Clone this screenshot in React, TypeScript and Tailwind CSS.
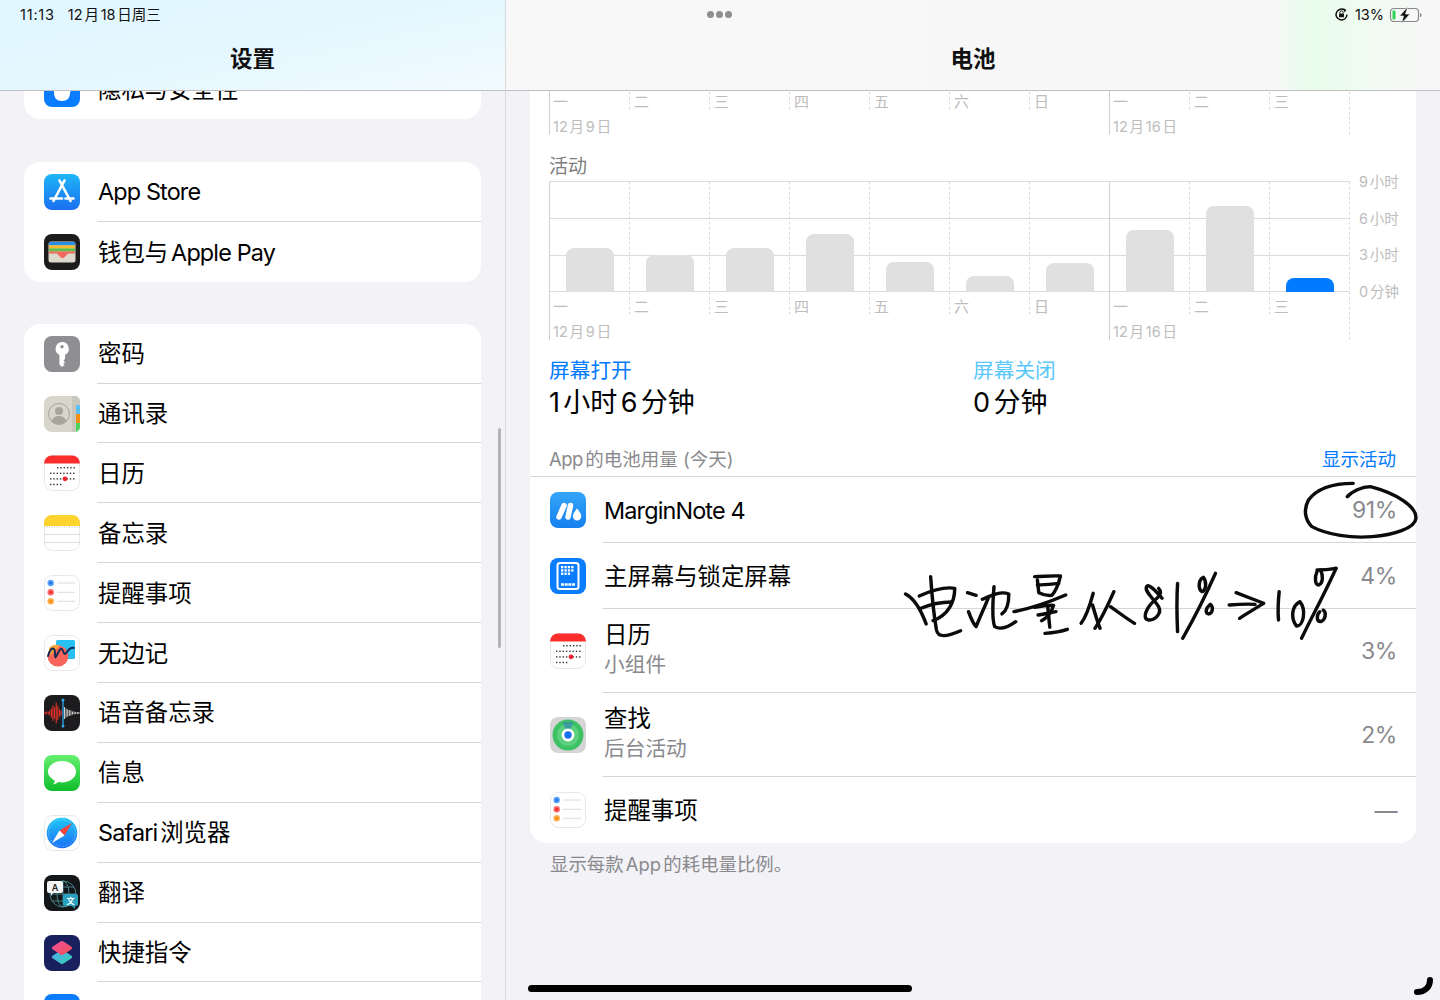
import React from "react";

const L = ({ children }: { children: React.ReactNode }) => <span className="tracking-[-0.85px]">{children}</span>;

const Cal = () => (
  <svg viewBox="0 0 36 36" className="w-9 h-9">
    <rect x="0.5" y="0.5" width="35" height="35" rx="8" fill="#fff" stroke="#e8e8e8" />
    <path d="M0 8.5a8 8 0 0 1 8-8h20a8 8 0 0 1 8 8H0z" fill="#fb2d2d" />
    {[[13,12,6],[6,17.6,8],[6,23.2,8],[6,28.8,4]].map((r,i)=>(
      <g key={i}>{Array.from({length:r[2]}).map((_,j)=>(
        <rect key={j} x={r[0]+j*3.3} y={r[1]} width="1.4" height="1.4" fill="#333" />
      ))}</g>
    ))}
    <circle cx="21" cy="23.8" r="2.4" fill="#f5222d" />
  </svg>
);
const Rem = () => (
  <svg viewBox="0 0 36 36" className="w-9 h-9">
    <rect x="0.5" y="0.5" width="35" height="35" rx="8" fill="#fff" stroke="#e8e8e8" />
    <circle cx="6.7" cy="8" r="3.2" fill="#5aa2f8" /><circle cx="6.7" cy="17.3" r="3.2" fill="#fa6868" /><circle cx="6.7" cy="26.3" r="3.2" fill="#fdb04e" />
    <circle cx="6.7" cy="8" r="1.5" fill="#1f6fe6" /><circle cx="6.7" cy="17.3" r="1.5" fill="#ee2b2b" /><circle cx="6.7" cy="26.3" r="1.5" fill="#f28c10" />
    <path d="M13 8h18M13 17.3h18M13 26.3h18" stroke="#dcdcdc" strokeWidth="1" />
  </svg>
);
const Privacy = () => (
  <svg viewBox="0 0 36 36" className="w-9 h-9">
    <rect width="36" height="36" rx="8" fill="#0a7cff" />
    <path d="M10 10v12c0 5 3 8 8 8s8-3 8-8c1-3 2-8 2-10l-3 2-2 6V6H12z" fill="#fff" />
  </svg>
);
const AppStore = () => (
  <svg viewBox="0 0 36 36" className="w-9 h-9">
    <defs><linearGradient id="as" x1="0" y1="0" x2="0" y2="1"><stop offset="0" stopColor="#1fb6f7" /><stop offset="1" stopColor="#1a6ff0" /></linearGradient></defs>
    <rect width="36" height="36" rx="8" fill="url(#as)" />
    <path d="M15.5 6.500L26.500 27M20.500 6.500L9.500 27M6.500 24.500H18M21.500 24.500H29.500" stroke="#fff" strokeWidth="2.600" strokeLinecap="round" fill="none" />
  </svg>
);
const Wallet = () => (
  <svg viewBox="0 0 36 36" className="w-9 h-9">
    <rect width="36" height="36" rx="8" fill="#1c1c1e" />
    <rect x="4.5" y="7.5" width="27" height="21" rx="2.5" fill="#ddd9cc" />
    <rect x="5" y="8" width="26" height="3.4" fill="#2a8de8" />
    <rect x="5" y="11.4" width="26" height="3" fill="#f9b928" />
    <rect x="5" y="14.4" width="26" height="3" fill="#5fbe4a" />
    <path d="M5 17.4h26v2H24l-3 3.4a3 3 0 0 1-5 0l-3-3.4H5z" fill="#f2695c" />
  </svg>
);
const Key = () => (
  <svg viewBox="0 0 36 36" className="w-9 h-9">
    <rect width="36" height="36" rx="8" fill="#8e8e93" />
    <path fillRule="evenodd" d="M18 6a6.8 6.8 0 0 1 3 12.9v4.1l-1.6 1.6 1.6 1.6-1.6 1.6 1.2 1.2L18 31l-2.6-2.6v-9.5A6.8 6.8 0 0 1 18 6zm0 3a1.7 1.7 0 1 0 0 3.4A1.7 1.7 0 0 0 18 9z" fill="#fff" />
  </svg>
);
const Contacts = () => (
  <svg viewBox="0 0 36 36" className="w-9 h-9">
    <rect width="36" height="36" rx="8" fill="#d8d5cb" />
    <path d="M31 0h-3v36h3a5 5 0 0 0 5-5V5a5 5 0 0 0-5-5z" fill="#c9c6bc" />
    <rect x="32" y="9" width="4" height="9" fill="#5ac1fb" /><rect x="32" y="18" width="4" height="9" fill="#f98e14" /><path d="M32 27h4v3a6 6 0 0 1-4 6z" fill="#4fd35f" />
    <circle cx="15" cy="18" r="10.5" fill="none" stroke="#a7a49b" strokeWidth="1" />
    <circle cx="15" cy="15" r="4" fill="#a7a49b" />
    <path d="M7.5 25c1.5-3.5 4-5 7.5-5s6 1.500 7.500 5a10.500 10.500 0 0 1-15 0z" fill="#a7a49b" />
  </svg>
);
const Notes = () => (
  <svg viewBox="0 0 36 36" className="w-9 h-9">
    <rect x="0.5" y="0.5" width="35" height="35" rx="8" fill="#fff" stroke="#e8e8e8" />
    <path d="M0 11V8a8 8 0 0 1 8-8h20a8 8 0 0 1 8 8v3z" fill="#fdd32e" />
    <path d="M0 12h36" stroke="#aaa" strokeWidth="0.8" strokeDasharray="1 1.5" />
    <path d="M0 19.500h36M0 27.500h36" stroke="#ddd" strokeWidth="1" />
  </svg>
);
const Freeform = () => (
  <svg viewBox="0 0 36 36" className="w-9 h-9">
    <rect x="0.5" y="0.5" width="35" height="35" rx="8" fill="#fff" stroke="#e8e8e8" />
    <rect x="12" y="5" width="19" height="19" rx="1.5" fill="#27c0f0" />
    <circle cx="14" cy="21" r="10.500" fill="#f9655b" />
    <path d="M5 13a10.500 10.500 0 0 1 11-2.500L6 21z" fill="#f9a13a" />
    <path d="M4 21c3-10 7-9 7-3s0 6 3 0 4-5 5-2 2 4 4 1 4-5 7-4" stroke="#0d2a55" strokeWidth="1.900" fill="none" strokeLinecap="round" />
  </svg>
);
const Voice = () => {
  const h = [2,2,2,4,7,12,9,16,11,6,4];
  const g = [12,9,7,6,5,3,3,2,2,2];
  return (
    <svg viewBox="0 0 36 36" className="w-9 h-9">
      <rect width="36" height="36" rx="8" fill="#1c1c1e" />
      {h.map((v,i)=>(<rect key={i} x={0.5+i*1.6} y={18-v/2*1.3} width="1" height={v*1.3} fill="#f5352b" />))}
      {g.map((v,i)=>(<rect key={i} x={20+i*1.600} y={18-v/2} width="1" height={v} fill="#cfcfcf" />))}
      <path d="M19 5v26" stroke="#2fa8f0" strokeWidth="1.300" />
      <circle cx="19" cy="5" r="1.500" fill="#2fa8f0" /><circle cx="19" cy="31" r="1.500" fill="#2fa8f0" />
    </svg>
  );
};
const Msg = () => (
  <svg viewBox="0 0 36 36" className="w-9 h-9">
    <defs><linearGradient id="mg" x1="0" y1="0" x2="0" y2="1"><stop offset="0" stopColor="#66f06f" /><stop offset="1" stopColor="#0fbd2c" /></linearGradient></defs>
    <rect width="36" height="36" rx="8" fill="url(#mg)" />
    <path d="M18 6c7.700 0 14 4.700 14 10.700S25.700 27.400 18 27.400c-1.300 0-2.500-.1-3.600-.4-1.300 1.200-3.400 2.200-5.400 2.300 1-1 1.600-2.300 1.700-3.900C7 23.500 4 20.400 4 16.700 4 10.700 10.300 6 18 6z" fill="#fff" />
  </svg>
);
const Safari = () => (
  <svg viewBox="0 0 36 36" className="w-9 h-9">
    <defs><linearGradient id="sf" x1="0" y1="0" x2="0" y2="1"><stop offset="0" stopColor="#1fc8f5" /><stop offset="1" stopColor="#1a6ef5" /></linearGradient></defs>
    <rect x="0.5" y="0.5" width="35" height="35" rx="8" fill="#fff" stroke="#e8e8e8" />
    <circle cx="18" cy="18" r="15.300" fill="url(#sf)" />
    <circle cx="18" cy="18" r="13.300" fill="none" stroke="#cfeeff" strokeWidth="1" strokeDasharray="0.6 1.800" />
    <path d="M28 8L15.500 15.500l5 5z" fill="#f9423a" />
    <path d="M8 28l12.500-7.500-5-5z" fill="#fff" />
  </svg>
);
const Translate = () => (
  <svg viewBox="0 0 36 36" className="w-9 h-9">
    <rect width="36" height="36" rx="8" fill="#14171a" />
    <g fill="none" stroke="#4d8a94" strokeWidth="0.900">
      <circle cx="19" cy="19" r="13" /><ellipse cx="19" cy="19" rx="6" ry="13" /><path d="M19 6v26M6 19h26M8 12h22M8 26h22" />
    </g>
    <path d="M5 6h12a2 2 0 0 1 2 2v8a2 2 0 0 1-2 2H9l-2 3v-3H5a2 2 0 0 1-2-2V8a2 2 0 0 1 2-2z" fill="#f4f4f4" />
    <text x="11" y="15.500" textAnchor="middle" fontSize="9" fontWeight="600" fill="#222" className="font-[Inter,sans-serif]">A</text>
    <path d="M21 19h11a2 2 0 0 1 2 2v8a2 2 0 0 1-2 2h-1v3l-3-3h-7a2 2 0 0 1-2-2v-8a2 2 0 0 1 2-2z" fill="#2aa2bd" />
    <text x="26.500" y="29" textAnchor="middle" fontSize="8" fontWeight="600" fill="#fff" className="font-['Noto_Sans_CJK_SC',sans-serif]">文</text>
  </svg>
);
const Shortcuts = () => (
  <svg viewBox="0 0 36 36" className="w-9 h-9">
    <defs>
      <linearGradient id="sa" x1="0" y1="0" x2="1" y2="1"><stop offset="0" stopColor="#f24ea0" /><stop offset="1" stopColor="#ef5350" /></linearGradient>
      <linearGradient id="sb" x1="0" y1="0" x2="1" y2="1"><stop offset="0" stopColor="#4fa8f0" /><stop offset="1" stopColor="#36d0b0" /></linearGradient>
    </defs>
    <rect width="36" height="36" rx="8" fill="#1a1f5e" />
    <path d="M16.500 15.500q1.500 -1 3 0l8 5.300q1.500 1.200 0 2.400l-8 5.300q-1.500 1 -3 0l-8 -5.300q-1.500 -1.200 0 -2.400z" fill="url(#sb)" />
    <path d="M16.500 6.500q1.500 -1 3 0l8 5.300q1.500 1.200 0 2.400l-8 5.300q-1.500 1 -3 0l-8 -5.300q-1.500 -1.200 0 -2.400z" fill="url(#sa)" />
  </svg>
);
const Blue = () => <div className="w-9 h-9 rounded-lg bg-[#0a7cff]" />;
const Margin = () => (
  <svg viewBox="0 0 36 36" className="w-9 h-9">
    <defs><linearGradient id="mn" x1="0" y1="0" x2="0" y2="1"><stop offset="0" stopColor="#33a6f8" /><stop offset="1" stopColor="#1680ee" /></linearGradient></defs>
    <rect width="36" height="36" rx="8" fill="url(#mn)" />
    <path d="M9 25L14 13.500M18 25L20.500 13.500" stroke="#fff" strokeWidth="5.500" strokeLinecap="round" />
    <path d="M27 16.500c2.200 2.800 4.300 5 4.300 7.800a4.200 4.200 0 0 1-8.400 0c0-2.500 1.900-4.800 4.100-7.800z" fill="#fff" />
  </svg>
);
const HomeIcon = () => (
  <svg viewBox="0 0 36 36" className="w-9 h-9">
    <rect width="36" height="36" rx="8" fill="#0a7cff" />
    <rect x="7.500" y="5" width="21" height="26" rx="2.500" fill="none" stroke="#fff" strokeWidth="2" />
    {[0,1,2].map(r=>[0,1,2,3].map(c=> (r===2 && c===3) ? null : (<rect key={`${r}${c}`} x={11+c*3.400} y={8+r*3.300} width="2.300" height="2.300" fill="#fff" />)))}
    <path d="M11 26.500h14" stroke="#fff" strokeWidth="2.400" strokeDasharray="3 0.700" />
  </svg>
);
const Find = () => (
  <svg viewBox="0 0 36 36" className="w-9 h-9">
    <rect width="36" height="36" rx="8" fill="#d5d5d5" />
    <circle cx="18" cy="18" r="15.500" fill="#3cc264" />
    <circle cx="18" cy="18" r="11" fill="#5cd07e" />
    <path d="M12.500 5l5.500 13 5.500-13z" fill="#3a9ca0" />
    <circle cx="18" cy="18" r="6.500" fill="#fff" />
    <circle cx="18" cy="18" r="3.700" fill="#1a6ff0" />
  </svg>
);

const autospace = "[text-autospace:normal]";

function SideRow({ icon, label, last }: { icon: React.ReactNode; label?: React.ReactNode; last?: boolean }) {
  return (
    <div className="flex h-[59.9px] items-center pl-5">
      <div className="shrink-0">{icon}</div>
      <div className={`ml-[17px] flex h-full flex-1 items-center pl-px pt-px text-[23.4px] text-black ${last ? "" : "border-b border-[#d6d6d8]"}`}>
        <span>{label}</span>
      </div>
    </div>
  );
}

const days = ["一", "二", "三", "四", "五", "六", "日", "一", "二", "三"];
const bars = [248, 255, 248, 234, 262, 276, 263, 230, 206, 278];

function Chart({ withBars, axis }: { withBars: boolean; axis: [string, number][] }) {
  const xs = Array.from({ length: 11 }, (_, i) => 549.5 + i * 80);
  return (
    <svg width="862" height="160" className={`block shrink-0 overflow-visible ${autospace}`}>
      <g transform="translate(-549 -181)">
        {[181.5, 218.5, 255.5, 291.5].map((y) => (
          <path key={y} d={`M549 ${y}H1350`} stroke="#dcdcdc" strokeWidth="1" />
        ))}
        {xs.map((x, i) => {
          const solid = i === 0 || i === 7;
          const end = solid || i === 10 ? 340 : 316;
          return (
            <path key={x} d={`M${x} 182V${end}`} stroke={solid ? "#cfcfcf" : "#d8d8d8"} strokeWidth="1" strokeDasharray={solid ? undefined : "2.500 2.500"} />
          );
        })}
        {withBars &&
          bars.map((t, i) => {
            const x = 566 + i * 80;
            return (
              <path key={i} d={`M${x} 292V${t + 8}a8 8 0 0 1 8-8h32a8 8 0 0 1 8 8V292z`} fill={i === 9 ? "#007aff" : "#e0e0e0"} />
            );
          })}
        {days.map((d, i) => (
          <text key={i} x={553 + i * 80 + (i > 0 && i !== 7 ? 1 : 0)} y="312" fontSize="15" fill="#bdbdbd">{d}</text>
        ))}
        <text x="553" y="337" fontSize="14.500" fill="#bdbdbd">12月9日</text>
        <text x="1113" y="337" fontSize="14.500" fill="#bdbdbd">12月16日</text>
        {axis.map(([t, y]) => (
          <text key={t} x="1359" y={y + 5} fontSize="14.500" fill="#bdbdbd">{t}</text>
        ))}
      </g>
    </svg>
  );
}

function AppRow({ icon, name, sub, value, last, tall }: { icon: React.ReactNode; name: React.ReactNode; sub?: string; value: string; last?: boolean; tall?: boolean }) {
  return (
    <div className={`flex items-center pl-5 ${tall ? "h-[84px]" : "h-[66px]"}`}>
      <div className="shrink-0">{icon}</div>
      <div className={`ml-[17px] flex h-full flex-1 items-center justify-between pl-px pr-[19px] pt-[2px] ${last ? "" : "border-b border-[#d6d6d8]"}`}>
        <div className={`flex flex-col ${sub ? "pb-[4px]" : ""}`}>
          <span className="text-[23.4px] leading-[30px] text-black">{name}</span>
          {sub && <span className="text-[20.700px] leading-[30px] text-[#8a8a8e]">{sub}</span>}
        </div>
        <span className="text-[23px] tracking-[-0.4px] text-[#8a8a8e]">{value}</span>
      </div>
    </div>
  );
}

function Ink() {
  const strokes = [
    "M1345 40C1290 40 1240 55 1215 90C1200 120 1205 150 1225 170C1270 195 1340 205 1400 200C1460 195 1525 175 1527 145C1530 110 1470 70 1395 50C1370 50 1340 65 1328 80",
    "M45 372C70 385 90 420 105 462",
    "M118 320C122 380 128 440 135 480C140 505 165 500 205 482",
    "M85 378C120 362 160 350 188 355C188 395 170 435 125 452",
    "M90 415C120 402 150 396 178 396",
    "M225 368L250 376M228 425C235 445 245 465 250 470C262 440 275 410 285 385",
    "M268 388C290 378 320 362 345 372C345 395 342 420 325 432",
    "M302 350C298 400 296 450 304 470C320 480 345 470 365 455",
    "M420 320C445 320 470 316 495 318C490 340 480 365 470 376C455 378 440 372 432 368L428 330",
    "M428 345C450 345 470 342 490 340",
    "M360 425C410 415 465 395 510 375",
    "M420 412C440 408 460 405 475 406C470 425 455 445 440 452",
    "M430 435C450 432 465 428 482 425M458 408C460 430 462 455 464 472",
    "M450 490C475 488 495 485 515 478",
    "M590 370C582 400 570 440 555 460",
    "M588 405C595 430 602 455 610 475",
    "M650 365C635 400 615 445 595 475",
    "M640 410C665 428 690 448 710 460",
    "M790 385C770 360 750 340 745 350C738 365 765 385 780 410C790 430 770 452 750 450C730 445 745 410 775 385C785 375 790 365 780 355",
    "M835 340C832 390 833 440 835 485",
    "M945 310C915 380 880 450 850 505",
    "M905 325C895 335 895 360 907 365C918 360 920 335 910 322",
    "M928 405C916 415 915 430 925 432C937 430 940 412 930 403",
    "M985 405C1010 403 1035 402 1060 403",
    "M1005 368C1030 378 1060 390 1085 400C1060 415 1035 432 1015 445",
    "M1130 365C1127 395 1126 425 1128 450",
    "M1190 395C1170 405 1160 440 1180 468C1200 470 1210 420 1190 395",
    "M1295 295C1265 365 1225 440 1195 505",
    "M1240 305C1233 320 1233 345 1245 345C1258 340 1258 315 1250 300",
    "M1240 300C1258 300 1278 298 1295 295",
    "M1248 425C1238 435 1238 455 1250 455C1265 450 1268 428 1258 420",
  ];
  return (
    <svg aria-hidden="true" viewBox="0 0 540 200" width="540" height="200" className="pointer-events-none absolute left-[890px] top-[470px]">
      <g transform="scale(0.3444 0.3333)" fill="none" stroke="#0b0b0b" strokeWidth="10" strokeLinecap="round" strokeLinejoin="round">
        {strokes.map((d, i) => (<path key={i} d={d} />))}
      </g>
    </svg>
  );
}

export default function App() {
  return (
    <div className={`relative flex h-[1000px] w-[1440px] overflow-hidden bg-[#f2f2f7] font-[Inter,'Noto_Sans_CJK_SC',sans-serif] ${autospace}`}>
      {/* Sidebar */}
      <div className="flex h-full w-[506px] shrink-0 flex-col border-r border-[#d9d9dc]">
        <div className="h-[91px] shrink-0 border-b border-[#bfbfc2] bg-[linear-gradient(168deg,#e0f7ff_0%,#e3f7ff_45%,#f2fbff_100%)]">
          <div className="flex h-[29px] items-center gap-[13px] pl-5 text-[14.500px] text-[#111]">
            <span className="tracking-[0.8px]">11:13</span>
            <span>12月18日周三</span>
          </div>
          <div className="flex h-[60px] items-center justify-center text-[22.500px] font-semibold text-[#111]">设置</div>
        </div>
        <div className="flex-1 overflow-hidden">
          <div className="-mt-[32px] ml-6 flex w-[457px] flex-col">
            <div className="rounded-2xl bg-white">
              <SideRow icon={<Privacy />} label="隐私与安全性" last />
            </div>
            <div className="mt-[43px] rounded-2xl bg-white">
              <SideRow icon={<AppStore />} label={<L>App Store</L>} />
              <SideRow icon={<Wallet />} label={<>钱包与<L>Apple Pay</L></>} last />
            </div>
            <div className="mt-[42px] rounded-2xl bg-white">
              <SideRow icon={<Key />} label="密码" />
              <SideRow icon={<Contacts />} label="通讯录" />
              <SideRow icon={<Cal />} label="日历" />
              <SideRow icon={<Notes />} label="备忘录" />
              <SideRow icon={<Rem />} label="提醒事项" />
              <SideRow icon={<Freeform />} label="无边记" />
              <SideRow icon={<Voice />} label="语音备忘录" />
              <SideRow icon={<Msg />} label="信息" />
              <SideRow icon={<Safari />} label={<><L>Safari</L>浏览器</>} />
              <SideRow icon={<Translate />} label="翻译" />
              <SideRow icon={<Shortcuts />} label="快捷指令" />
              <SideRow icon={<Blue />} last />
            </div>
          </div>
        </div>
      </div>

      {/* Detail */}
      <div className="flex h-full flex-1 flex-col">
        <div className="h-[91px] shrink-0 border-b border-[#bfbfc2] bg-[linear-gradient(90deg,#f8f8f8_0%,#f7f7f7_82%,#e9fcec_86%,#eefbef_91%,#f6f8f6_97%,#f7f7f7_100%)]">
          <div className="flex h-[29px] items-center justify-end gap-[6px] pr-[17px] text-[14.500px] text-[#111]">
            <svg viewBox="0 0 16 16" width="15" height="15">
              <path d="M13.800 8A5.800 5.800 0 1 1 11.500 3.400" fill="none" stroke="#111" strokeWidth="1.600" />
              <path d="M10.300 1.300l3 2-2.400 2.500z" fill="#111" />
              <rect x="5.400" y="7" width="5.200" height="4" rx="0.600" fill="#111" />
              <path d="M6.300 7V5.800a1.700 1.700 0 0 1 3.400 0V7" fill="none" stroke="#111" strokeWidth="1" />
            </svg>
            <span>13%</span>
            <svg viewBox="0 0 33 14" width="33" height="14" className="overflow-visible">
              <rect x="0.500" y="0.500" width="28" height="13" rx="3.500" fill="none" stroke="#888" strokeWidth="1.200" />
              <rect x="2.500" y="2.500" width="3" height="9" rx="1" fill="#30d158" />
              <path d="M30 5v4c1 0 1.500-1 1.500-2s-.5-2-1.500-2z" fill="#888" />
              <path d="M18 -1.500L9.500 8h4L11.500 15.500 20 6h-4.500z" fill="#111" stroke="#f6f8f6" strokeWidth="0.700" />
            </svg>
          </div>
          <div className="flex h-[60px] items-center justify-center text-[22.500px] font-semibold text-[#111]">电池</div>
        </div>
        <div className="flex-1 overflow-hidden">
          <div className="ml-6 w-[886px] overflow-hidden rounded-b-2xl bg-white">
            <div className="ml-[19px] flex flex-col">
              <div className="-mt-[115px]">
                <Chart withBars={false} axis={[["0%", 87]]} />
              </div>
              <div className="flex h-[45px] items-center pt-[15px] text-[19px] leading-none text-[#7c7c7c]">活动</div>
              <Chart withBars axis={[["9小时", 182], ["6小时", 219], ["3小时", 255], ["0分钟", 292]]} />
              <div className="mt-[16px] grid grid-cols-[424px_1fr]">
                <div className="flex flex-col">
                  <span className="h-[29px] text-[20.700px] leading-[28px] text-[#007aff]">屏幕打开</span>
                  <span className="h-[34px] text-[27px] leading-[34px] text-black">1小时6分钟</span>
                </div>
                <div className="flex flex-col">
                  <span className="h-[29px] text-[20.700px] leading-[28px] text-[#5ac8fa]">屏幕关闭</span>
                  <span className="h-[34px] text-[27px] leading-[34px] text-black">0分钟</span>
                </div>
              </div>
              <div className="mt-[26px] flex h-[30px] items-start justify-between pr-5 text-[18.500px] leading-[26px]">
                <span className="text-[#8a8a8e]"><span className="tracking-[-0.5px]">App</span>的电池用量 (今天)</span>
                <span className="text-[#007aff]">显示活动</span>
              </div>
            </div>
            <div className="border-t border-[#d6d6d8]">
              <AppRow icon={<Margin />} name={<L>MarginNote 4</L>} value="91%" />
              <AppRow icon={<HomeIcon />} name="主屏幕与锁定屏幕" value="4%" />
              <AppRow icon={<Cal />} name="日历" sub="小组件" value="3%" tall />
              <AppRow icon={<Find />} name="查找" sub="后台活动" value="2%" tall />
              <AppRow icon={<Rem />} name="提醒事项" value="—" last />
            </div>
          </div>
          <div className="ml-[44px] mt-[8px] text-[18.400px] leading-[26px] text-[#8a8a8e]">显示每款App的耗电量比例。</div>
        </div>
      </div>

      {/* Overlays */}
      <div className="absolute left-[707px] top-[11px] flex gap-[2px]">
        <span className="h-[7px] w-[7px] rounded-full bg-[#8e8e93]" />
        <span className="h-[7px] w-[7px] rounded-full bg-[#8e8e93]" />
        <span className="h-[7px] w-[7px] rounded-full bg-[#8e8e93]" />
      </div>
      <div className="absolute left-[498px] top-[428px] h-[220px] w-[3px] rounded-full bg-[#b4b4b8]" />
      <Ink />
      <div className="absolute left-[528px] top-[985px] h-[7px] w-[384px] rounded-full bg-black" />
      <svg viewBox="0 0 60 40" width="60" height="40" className="absolute left-[1380px] top-[960px]">
        <path d="M50 20C50 27 45 32 37 32" fill="none" stroke="#000" strokeWidth="6" strokeLinecap="round" />
      </svg>
    </div>
  );
}
